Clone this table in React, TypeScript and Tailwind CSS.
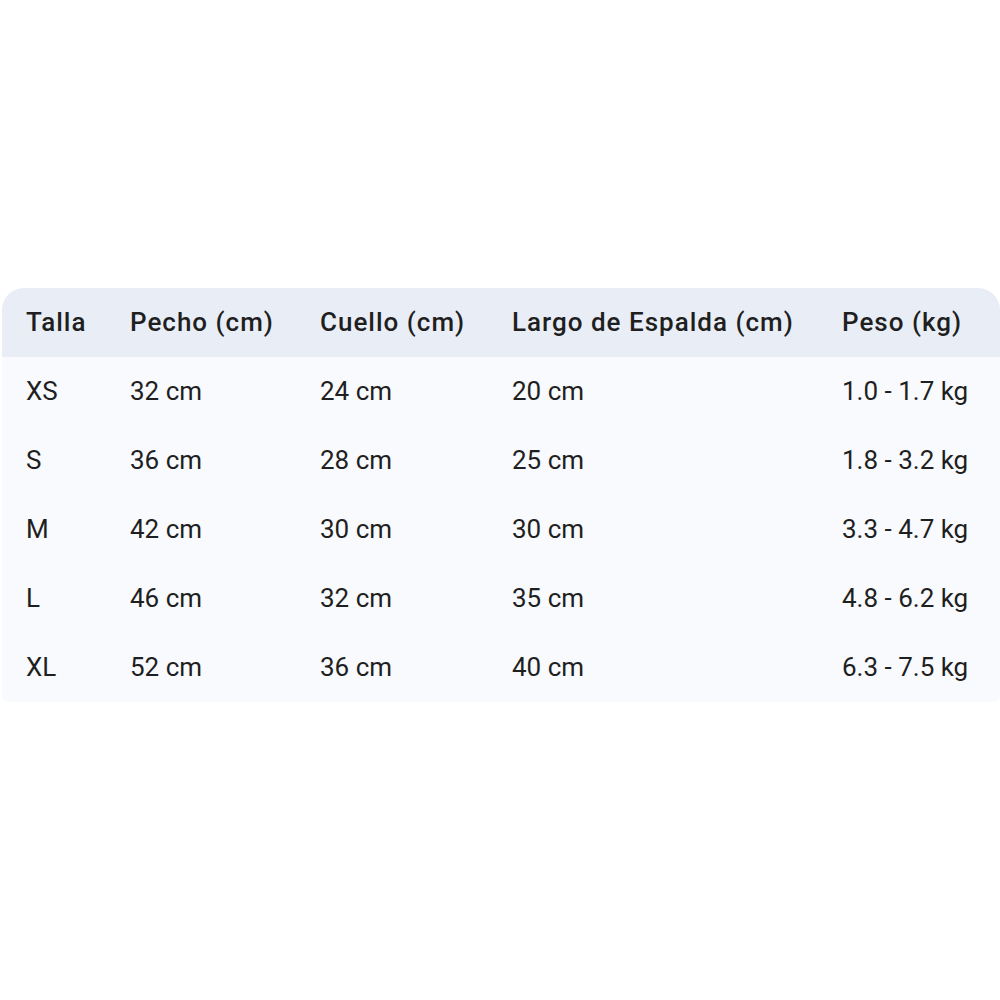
const headers = ["Talla", "Pecho (cm)", "Cuello (cm)", "Largo de Espalda (cm)", "Peso (kg)"];

const rows = [
  ["XS", "32 cm", "24 cm", "20 cm", "1.0 - 1.7 kg"],
  ["S", "36 cm", "28 cm", "25 cm", "1.8 - 3.2 kg"],
  ["M", "42 cm", "30 cm", "30 cm", "3.3 - 4.7 kg"],
  ["L", "46 cm", "32 cm", "35 cm", "4.8 - 6.2 kg"],
  ["XL", "52 cm", "36 cm", "40 cm", "6.3 - 7.5 kg"],
];

const cols = "grid grid-cols-[104px_190px_192px_330px_1fr]";

export default function App() {
  return (
    <div className="min-h-[1000px] w-[1000px] bg-white pl-[2px] pt-[288px] font-['Roboto',sans-serif] text-[#1f1f1f]">
      <div className="overflow-hidden rounded-t-[22px] rounded-b-[6px] bg-[#f8fafd]">
        <div className={`${cols} h-[69px] items-center bg-[#e9eef6] text-[26px] font-medium tracking-[1px]`}>
          {headers.map((h) => (
            <div key={h} className="pl-[24px] whitespace-nowrap">
              {h}
            </div>
          ))}
        </div>
        {rows.map((r) => (
          <div key={r[0]} className={`${cols} h-[69px] items-center text-[26px]`}>
            {r.map((c, i) => (
              <div key={i} className="pl-[24px] whitespace-nowrap">
                {c}
              </div>
            ))}
          </div>
        ))}
      </div>
    </div>
  );
}
